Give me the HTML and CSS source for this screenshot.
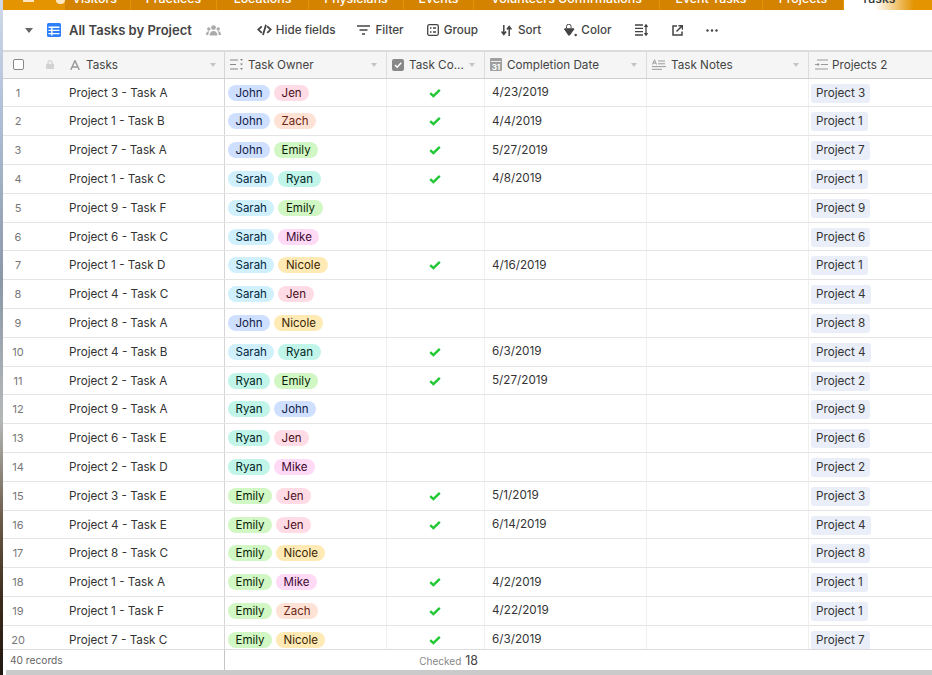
FILE: index.html
```html
<!DOCTYPE html>
<html lang="en">
<head>
    <meta charset="UTF-8">
    <meta name="viewport" content="width=device-width, initial-scale=1.0">
    <title>All Tasks by Project</title>
    <link rel="stylesheet" href="styles.css">
</head>
<body>
    <svg class="defs" width="0" height="0">
        <symbol id="check" viewBox="0 0 12 10"><path d="M1.2 5.2 L4.4 8.2 L10.8 1.8" fill="none" stroke="#20c933" stroke-width="2.4"/></symbol>
    </svg>

    <!-- Desktop wallpaper showing at the window edge -->
    <div class="wallpaper"></div>

    <div class="app">
        <!-- Table tabs, cut off by the top of the picture -->
        <div class="tabs">
            <div class="tab-lead"><span class="lead-bar"></span><span class="lead-dot"></span></div>
            <div class="tab w-66">Visitors</div>
            <div class="tab w-86">Practices</div>
            <div class="tab w-92">Locations</div>
            <div class="tab w-95">Physicians</div>
            <div class="tab w-70">Events</div>
            <div class="tab w-186">Volunteers Confirmations</div>
            <div class="tab w-103">Event Tasks</div>
            <div class="tab w-81">Projects</div>
            <div class="tab-active">Tasks</div>
        </div>

        <!-- View toolbar -->
        <div class="toolbar">
            <span class="caret caret-dark"></span>
            <svg class="view-icon" width="14" height="14" viewBox="0 0 14 14"><rect width="14" height="14" rx="1.5" fill="#2d7ff9"/><path d="M1.5 4.2h11M1.5 7.4h11M1.5 10.6h11M4.8 4v8.5" stroke="#fff" stroke-width="1.4"/></svg>
            <span class="view-name">All Tasks by Project</span>
            <svg class="people-icon" width="15" height="11" viewBox="0 0 15 11"><g fill="#aaa"><circle cx="7.5" cy="2.6" r="2.4"/><circle cx="2.8" cy="4" r="1.7"/><circle cx="12.2" cy="4" r="1.7"/><path d="M3.6 10.5c0-3 1.6-4.6 3.9-4.6s3.9 1.6 3.9 4.6z"/><path d="M0 10c0-2.4 1-3.8 2.8-3.8l.5.1c-.7 1-1 2.2-1 3.7zM15 10c0-2.4-1-3.8-2.8-3.8l-.5.1c.7 1 1 2.2 1 3.7z"/></g></svg>
            <div class="tool t-hide">
                <svg width="15" height="12" viewBox="0 0 15 12"><path d="M4.8 2.3 1.3 5.6l3.5 3.3M10.2 2.3l3.500 3.3-3.500 3.3M9 .8 6 11" fill="none" stroke="#444" stroke-width="1.8"/></svg>
                <span>Hide fields</span>
            </div>
            <div class="tool t-filter">
                <svg width="13" height="10" viewBox="0 0 13 10"><path d="M0 1h13M2.5 5h8M5 9h3" stroke="#444" stroke-width="1.7"/></svg>
                <span>Filter</span>
            </div>
            <div class="tool t-group">
                <svg width="12" height="12" viewBox="0 0 12 12"><rect x=".7" y=".7" width="10.6" height="10.6" rx="1.5" fill="none" stroke="#444" stroke-width="1.3"/><path d="M3 4h1.5M3 8h1.500M6 4h3M6 8h3" stroke="#444" stroke-width="1.4"/></svg>
                <span>Group</span>
            </div>
            <div class="tool t-sort">
                <svg width="11" height="11" viewBox="0 0 11 11"><path d="M2.8 0v9M.5 6.500l2.300 3 2.300-3M8.200 11V2M5.900 4.500l2.300-3 2.300 3" fill="none" stroke="#444" stroke-width="1.5"/></svg>
                <span>Sort</span>
            </div>
            <div class="tool t-color">
                <svg width="14" height="13" viewBox="0 0 14 13"><path d="M3.5 4V2.500a2.300 2.300 0 0 1 4.600 0V4" fill="none" stroke="#444" stroke-width="1"/><path d="M1 5h10.500L6.800 11.500h-1.500z" fill="#444"/><path d="M1.500 5h9.500" stroke="#444" stroke-width="1.6"/><circle cx="12.7" cy="11" r="1.2" fill="#444"/></svg>
                <span>Color</span>
            </div>
            <svg class="t-height" width="13" height="12" viewBox="0 0 13 12"><path d="M0 1h8M0 4.300h8M0 7.600h8M0 11h8" stroke="#444" stroke-width="1.3"/><path d="M11 1v10M9.500 3 11 .8 12.500 3M9.500 9 11 11.200 12.500 9" fill="none" stroke="#444" stroke-width="1.3"/></svg>
            <svg class="t-share" width="11" height="11" viewBox="0 0 11 11"><path d="M5 1H1v9h9V6.500" fill="none" stroke="#444" stroke-width="1.5"/><path d="M4.500 6.500 10 1M6.500.8h4v4" fill="none" stroke="#444" stroke-width="1.5"/></svg>
            <svg class="t-more" width="12" height="3" viewBox="0 0 12 3"><g fill="#444"><circle cx="1.5" cy="1.5" r="1.2"/><circle cx="6" cy="1.5" r="1.2"/><circle cx="10.5" cy="1.5" r="1.2"/></g></svg>
        </div>

        <!-- Column headers -->
        <div class="grid-row head">
            <div class="cell head-first">
                <span class="box"></span>
                <svg class="lock" width="8" height="9" viewBox="0 0 8 9"><path d="M2 4V2.600a2 2 0 0 1 4 0V4" fill="none" stroke="#d2d2d2" stroke-width="1.2"/><rect y="3.8" width="8" height="5.2" rx=".8" fill="#d2d2d2"/></svg>
                <svg class="field-a" width="10" height="10" viewBox="0 0 10 10"><path d="M.7 10 5 .6 9.300 10M2.200 7h5.600" fill="none" stroke="#999" stroke-width="1.4"/></svg>
                <span class="head-label">Tasks</span>
                <span class="caret"></span>
            </div>
            <div class="cell">
                <svg class="field-icon" width="13" height="11" viewBox="0 0 13 11"><path d="M0 1h8M0 5.500h6M0 10h8" stroke="#888" stroke-width="1.2"/><path d="M10 0h3l-1.500 2zM10 4.500h3l-1.500 2zM10 9h3l-1.500 2z" fill="#888"/></svg>
                <span class="head-label">Task Owner</span>
                <span class="caret"></span>
            </div>
            <div class="cell">
                <svg class="field-icon" width="12" height="12" viewBox="0 0 12 12"><rect width="12" height="12" rx="2" fill="#888"/><path d="M3 6l2.200 2.200L9.200 3.800" fill="none" stroke="#fff" stroke-width="1.5"/></svg>
                <span class="head-label">Task Co...</span>
                <span class="caret"></span>
            </div>
            <div class="cell">
                <svg class="field-icon" width="12" height="13" viewBox="0 0 12 13"><rect width="12" height="13" rx="1" fill="#a0a0a0"/><rect x="1" y="3" width="10" height=".8" fill="#fff"/><text x="6" y="11.5" text-anchor="middle" class="cal-num">31</text></svg>
                <span class="head-label">Completion Date</span>
                <span class="caret"></span>
            </div>
            <div class="cell">
                <svg class="field-icon" width="14" height="11" viewBox="0 0 14 11"><path d="M.5 5.500 2.500.8l2 4.700M1.200 4h2.600" fill="none" stroke="#999" stroke-width="1"/><path d="M6 2h7M6 4.800h7M0 7.600h14M0 10.300h10" stroke="#999" stroke-width="1"/></svg>
                <span class="head-label">Task Notes</span>
                <span class="caret"></span>
            </div>
            <div class="cell">
                <svg class="field-icon" width="13" height="11" viewBox="0 0 13 11"><path d="M2 1h11M6 5.500h7M0 10h13" stroke="#999" stroke-width="1.2"/><path d="M0 5.500h4M2.500 4l1.500 1.500L2.500 7" fill="none" stroke="#999" stroke-width="1"/></svg>
                <span class="head-label">Projects 2</span>
            </div>
        </div>

        <!-- Records -->
        <div class="grid-body">
            <div class="grid-row"><div class="cell first"><span class="num">1</span><span class="name">Project 3 - Task A</span></div><div class="cell owners"><span class="chip john">John</span><span class="chip jen">Jen</span></div><div class="cell done"><svg width="12" height="10"><use href="#check"/></svg></div><div class="cell date">4/23/2019</div><div class="cell"></div><div class="cell linked"><span class="project">Project 3</span></div></div>
            <div class="grid-row"><div class="cell first"><span class="num">2</span><span class="name">Project 1 - Task B</span></div><div class="cell owners"><span class="chip john">John</span><span class="chip zach">Zach</span></div><div class="cell done"><svg width="12" height="10"><use href="#check"/></svg></div><div class="cell date">4/4/2019</div><div class="cell"></div><div class="cell linked"><span class="project">Project 1</span></div></div>
            <div class="grid-row"><div class="cell first"><span class="num">3</span><span class="name">Project 7 - Task A</span></div><div class="cell owners"><span class="chip john">John</span><span class="chip emily">Emily</span></div><div class="cell done"><svg width="12" height="10"><use href="#check"/></svg></div><div class="cell date">5/27/2019</div><div class="cell"></div><div class="cell linked"><span class="project">Project 7</span></div></div>
            <div class="grid-row"><div class="cell first"><span class="num">4</span><span class="name">Project 1 - Task C</span></div><div class="cell owners"><span class="chip sarah">Sarah</span><span class="chip ryan">Ryan</span></div><div class="cell done"><svg width="12" height="10"><use href="#check"/></svg></div><div class="cell date">4/8/2019</div><div class="cell"></div><div class="cell linked"><span class="project">Project 1</span></div></div>
            <div class="grid-row"><div class="cell first"><span class="num">5</span><span class="name">Project 9 - Task F</span></div><div class="cell owners"><span class="chip sarah">Sarah</span><span class="chip emily">Emily</span></div><div class="cell done"></div><div class="cell date"></div><div class="cell"></div><div class="cell linked"><span class="project">Project 9</span></div></div>
            <div class="grid-row"><div class="cell first"><span class="num">6</span><span class="name">Project 6 - Task C</span></div><div class="cell owners"><span class="chip sarah">Sarah</span><span class="chip mike">Mike</span></div><div class="cell done"></div><div class="cell date"></div><div class="cell"></div><div class="cell linked"><span class="project">Project 6</span></div></div>
            <div class="grid-row"><div class="cell first"><span class="num">7</span><span class="name">Project 1 - Task D</span></div><div class="cell owners"><span class="chip sarah">Sarah</span><span class="chip nicole">Nicole</span></div><div class="cell done"><svg width="12" height="10"><use href="#check"/></svg></div><div class="cell date">4/16/2019</div><div class="cell"></div><div class="cell linked"><span class="project">Project 1</span></div></div>
            <div class="grid-row"><div class="cell first"><span class="num">8</span><span class="name">Project 4 - Task C</span></div><div class="cell owners"><span class="chip sarah">Sarah</span><span class="chip jen">Jen</span></div><div class="cell done"></div><div class="cell date"></div><div class="cell"></div><div class="cell linked"><span class="project">Project 4</span></div></div>
            <div class="grid-row"><div class="cell first"><span class="num">9</span><span class="name">Project 8 - Task A</span></div><div class="cell owners"><span class="chip john">John</span><span class="chip nicole">Nicole</span></div><div class="cell done"></div><div class="cell date"></div><div class="cell"></div><div class="cell linked"><span class="project">Project 8</span></div></div>
            <div class="grid-row"><div class="cell first"><span class="num">10</span><span class="name">Project 4 - Task B</span></div><div class="cell owners"><span class="chip sarah">Sarah</span><span class="chip ryan">Ryan</span></div><div class="cell done"><svg width="12" height="10"><use href="#check"/></svg></div><div class="cell date">6/3/2019</div><div class="cell"></div><div class="cell linked"><span class="project">Project 4</span></div></div>
            <div class="grid-row"><div class="cell first"><span class="num">11</span><span class="name">Project 2 - Task A</span></div><div class="cell owners"><span class="chip ryan">Ryan</span><span class="chip emily">Emily</span></div><div class="cell done"><svg width="12" height="10"><use href="#check"/></svg></div><div class="cell date">5/27/2019</div><div class="cell"></div><div class="cell linked"><span class="project">Project 2</span></div></div>
            <div class="grid-row"><div class="cell first"><span class="num">12</span><span class="name">Project 9 - Task A</span></div><div class="cell owners"><span class="chip ryan">Ryan</span><span class="chip john">John</span></div><div class="cell done"></div><div class="cell date"></div><div class="cell"></div><div class="cell linked"><span class="project">Project 9</span></div></div>
            <div class="grid-row"><div class="cell first"><span class="num">13</span><span class="name">Project 6 - Task E</span></div><div class="cell owners"><span class="chip ryan">Ryan</span><span class="chip jen">Jen</span></div><div class="cell done"></div><div class="cell date"></div><div class="cell"></div><div class="cell linked"><span class="project">Project 6</span></div></div>
            <div class="grid-row"><div class="cell first"><span class="num">14</span><span class="name">Project 2 - Task D</span></div><div class="cell owners"><span class="chip ryan">Ryan</span><span class="chip mike">Mike</span></div><div class="cell done"></div><div class="cell date"></div><div class="cell"></div><div class="cell linked"><span class="project">Project 2</span></div></div>
            <div class="grid-row"><div class="cell first"><span class="num">15</span><span class="name">Project 3 - Task E</span></div><div class="cell owners"><span class="chip emily">Emily</span><span class="chip jen">Jen</span></div><div class="cell done"><svg width="12" height="10"><use href="#check"/></svg></div><div class="cell date">5/1/2019</div><div class="cell"></div><div class="cell linked"><span class="project">Project 3</span></div></div>
            <div class="grid-row"><div class="cell first"><span class="num">16</span><span class="name">Project 4 - Task E</span></div><div class="cell owners"><span class="chip emily">Emily</span><span class="chip jen">Jen</span></div><div class="cell done"><svg width="12" height="10"><use href="#check"/></svg></div><div class="cell date">6/14/2019</div><div class="cell"></div><div class="cell linked"><span class="project">Project 4</span></div></div>
            <div class="grid-row"><div class="cell first"><span class="num">17</span><span class="name">Project 8 - Task C</span></div><div class="cell owners"><span class="chip emily">Emily</span><span class="chip nicole">Nicole</span></div><div class="cell done"></div><div class="cell date"></div><div class="cell"></div><div class="cell linked"><span class="project">Project 8</span></div></div>
            <div class="grid-row"><div class="cell first"><span class="num">18</span><span class="name">Project 1 - Task A</span></div><div class="cell owners"><span class="chip emily">Emily</span><span class="chip mike">Mike</span></div><div class="cell done"><svg width="12" height="10"><use href="#check"/></svg></div><div class="cell date">4/2/2019</div><div class="cell"></div><div class="cell linked"><span class="project">Project 1</span></div></div>
            <div class="grid-row"><div class="cell first"><span class="num">19</span><span class="name">Project 1 - Task F</span></div><div class="cell owners"><span class="chip emily">Emily</span><span class="chip zach">Zach</span></div><div class="cell done"><svg width="12" height="10"><use href="#check"/></svg></div><div class="cell date">4/22/2019</div><div class="cell"></div><div class="cell linked"><span class="project">Project 1</span></div></div>
            <div class="grid-row"><div class="cell first"><span class="num">20</span><span class="name">Project 7 - Task C</span></div><div class="cell owners"><span class="chip emily">Emily</span><span class="chip nicole">Nicole</span></div><div class="cell done"><svg width="12" height="10"><use href="#check"/></svg></div><div class="cell date">6/3/2019</div><div class="cell"></div><div class="cell linked"><span class="project">Project 7</span></div></div>
        </div>

        <!-- Summary bar -->
        <div class="summary">
            <div class="records">40 records</div>
            <div class="checked"><span class="checked-label">Checked</span><span class="checked-count">18</span></div>
        </div>
        <div class="scrollbar"></div>
    </div>
</body>
</html>
```

FILE: styles.css
```css
body {
    margin: 0;
    height: 675px;
    display: flex;
    overflow: hidden;
    background-color: #fff;
    color: #333;
    font-family: Inter, "Liberation Sans", sans-serif;
    font-size: 11.7px;
}

.defs {
    position: absolute;
}

.wallpaper {
    width: 3px;
    flex: none;
    background: linear-gradient(to bottom, #d0d9e8 0, #b4c2da 100px, #8b98a8 280px, #b5b8b8 420px, #6b5a48 520px, #3c2a1c 600px, #201812 675px);
}

.app {
    flex: 1;
    min-width: 0;
    display: flex;
    flex-direction: column;
}

/* Tabs */
.tabs {
    height: 10px;
    flex: none;
    display: flex;
    overflow: hidden;
    background-color: #e39400;
    color: #fff;
    font-size: 12.4px;
    font-weight: 500;
}

.tab-lead {
    width: 62px;
    flex: none;
    display: flex;
    padding-left: 20px;
    box-sizing: border-box;
    gap: 22px;
}

.lead-bar {
    width: 11px;
    height: 2px;
    background-color: #fbe6c0;
}

.lead-dot {
    width: 9px;
    height: 4px;
    border-radius: 0 0 5px 5px;
    background-color: #fbe6c0;
}

.tab {
    flex: none;
    box-sizing: border-box;
    height: 11px;
    margin-top: -1px;
    line-height: 0;
    text-align: center;
    background-color: #d48300;
    border-right: 1px solid #e39400;
}

.w-66 { width: 66px; padding-right: 6px; }
.w-86 { width: 86px; }
.w-92 { width: 92px; }
.w-95 { width: 95px; }
.w-70 { width: 70px; }
.w-186 { width: 186px; }
.w-103 { width: 103px; }
.w-81 { width: 81px; }

.tab-active {
    flex: 1;
    height: 11px;
    margin-top: -1px;
    line-height: 0;
    padding-left: 17px;
    background: linear-gradient(to right, #fff 31px, #e39400 70px);
    color: #333;
    white-space: nowrap;
}

/* Toolbar */
.toolbar {
    height: 40px;
    flex: none;
    display: flex;
    align-items: center;
    padding-left: 22px;
    color: #444;
    border-bottom: 2px solid #dcdcdc;
}

.caret {
    width: 0;
    height: 0;
    margin-left: auto;
    border-left: 3.5px solid transparent;
    border-right: 3.5px solid transparent;
    border-top: 4px solid #c4c4c4;
}

.caret-dark {
    margin-left: 0;
    border-left-width: 4px;
    border-right-width: 4px;
    border-top: 5px solid #666;
}

.view-icon {
    margin-left: 14px;
}

.view-name {
    margin-left: 8px;
    font-size: 13px;
    font-weight: 600;
    white-space: nowrap;
}

.people-icon {
    margin-left: 14px;
}

.tool {
    display: flex;
    align-items: center;
    gap: 4px;
    font-weight: 500;
    white-space: nowrap;
}

.t-hide { margin-left: 36px; }
.t-filter { margin-left: 22px; gap: 5px; }
.t-group { margin-left: 23px; gap: 5px; }
.t-sort { margin-left: 23px; gap: 6px; }
.t-color { margin-left: 22px; }
.t-height { margin-left: 24px; }
.t-share { margin-left: 24px; }
.t-more { margin-left: 23px; }

/* Grid */
.grid-row {
    height: 28.8px;
    box-sizing: border-box;
    display: grid;
    grid-template-columns: 222px 162px 98px 162px 162px 1fr;
    border-bottom: 1px solid #e4e4e4;
}

.head {
    height: 26.7px;
    flex: none;
    background-color: #f5f5f5;
    border-bottom: 1px solid #cfcfcf;
    color: #444;
}

.cell {
    display: flex;
    align-items: center;
    min-width: 0;
    padding-left: 5px;
    border-right: 1px solid #f0f0f0;
    white-space: nowrap;
}

.head .cell {
    padding: 0 9px 0 5px;
    border-right-color: #dcdcdc;
}

.head .cell.head-first,
.grid-row .first {
    border-right: 1px solid #d6d6d6;
    padding-left: 0;
}

.head .cell:last-child,
.grid-row .cell:last-child {
    border-right: 0;
}

.head .cell:last-child {
    padding-left: 6px;
}

.head .cell:last-child .head-label {
    margin-left: 4px;
}

.head-first .box {
    width: 9px;
    height: 9px;
    margin-left: 10px;
    background-color: #fff;
    border: 1px solid #888;
    border-radius: 2px;
    flex: none;
}

.lock {
    margin-left: 22px;
}

.field-a {
    margin-left: 16px;
}

.head-first .head-label {
    margin-left: 6px;
}

.head-first .caret {
    margin-right: -1px;
}

.field-icon {
    flex: none;
}

.cal-num {
    fill: #fff;
    font-size: 8px;
    font-weight: 700;
}

.head-label {
    margin-left: 5px;
}

.grid-body {
    flex: 1;
    min-height: 0;
    overflow: hidden;
}

.num {
    width: 30px;
    margin-right: 36px;
    flex: none;
    text-align: center;
    color: #777;
    font-size: 11px;
}

.name {
    color: #333;
}

.owners {
    gap: 4px;
    padding-left: 3px;
    font-size: 11.5px;
}

.chip {
    height: 16px;
    line-height: 16px;
    padding: 0 7.5px;
    border-radius: 8px;
}

.john { background-color: #cfdfff; color: #102046; }
.jen { background-color: #ffdce5; color: #4c0c1c; }
.zach { background-color: #fee2d5; color: #6b2613; }
.emily { background-color: #d1f7c4; color: #0b1d05; }
.sarah { background-color: #d0f0fd; color: #04283f; }
.ryan { background-color: #c2f5e9; color: #012524; }
.mike { background-color: #ffdaf6; color: #400832; }
.nicole { background-color: #ffeab6; color: #3b2501; }

.done {
    justify-content: center;
    padding: 0 2px 0 0;
}

.date {
    padding: 0 0 1px 7px;
}

.linked {
    padding-top: 1px;
}

.project {
    height: 19px;
    line-height: 19px;
    padding: 0 5px;
    margin-left: -3px;
    border-radius: 3px;
    background-color: #e9eef9;
}

/* Summary bar */
.summary {
    height: 21px;
    flex: none;
    box-sizing: border-box;
    display: flex;
    align-items: center;
    border-top: 1px solid #dcdcdc;
}

.records {
    width: 222px;
    height: 100%;
    flex: none;
    box-sizing: border-box;
    padding: 4px 0 0 7px;
    color: #666;
    font-size: 10.2px;
    border-right: 1px solid #c4c4c4;
}

.checked {
    width: 253px;
    display: flex;
    justify-content: flex-end;
    align-items: baseline;
    gap: 4px;
}

.checked-label {
    font-size: 10px;
    color: #888;
}

.checked-count {
    font-size: 12.4px;
    color: #444;
}

.scrollbar {
    height: 5px;
    flex: none;
    margin-left: 3px;
    background-color: #cacaca;
}
```
